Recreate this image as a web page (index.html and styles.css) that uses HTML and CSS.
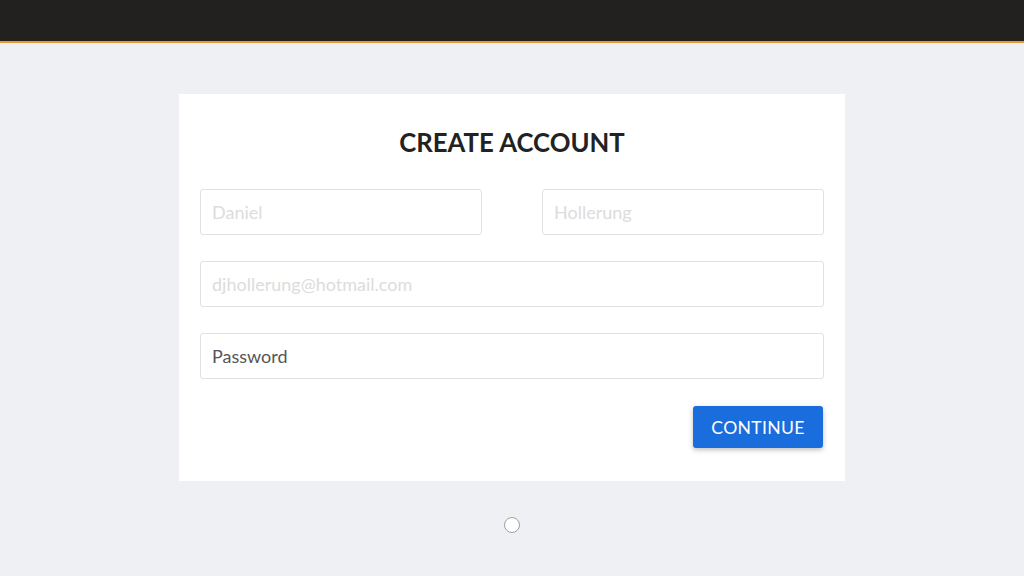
FILE: index.html
```html
<!DOCTYPE html>
<html lang="en">
<head>
<meta charset="utf-8">
<title>Create Account</title>
<link rel="stylesheet" href="styles.css">
</head>
<body>
<header class="topbar"></header>
<main class="page">
  <form class="card">
    <h1 class="title">CREATE ACCOUNT</h1>
    <div class="row two">
      <input class="field" type="text" placeholder="Daniel">
      <input class="field" type="text" placeholder="Hollerung">
    </div>
    <div class="row">
      <input class="field" type="email" placeholder="djhollerung@hotmail.com">
    </div>
    <div class="row">
      <input class="field filled" type="text" value="Password">
    </div>
    <div class="actions">
      <button class="btn" type="button">CONTINUE</button>
    </div>
  </form>
  <div class="spinner"></div>
</main>
</body>
</html>
```
FILE: styles.css
```css
html, body {
  margin: 0;
  padding: 0;
}
body {
  background: #eff0f4;
  font-family: Lato, "Open Sans", sans-serif;
  height: 576px;
  overflow: hidden;
}
.topbar {
  height: 41px;
  background: #222120;
  border-bottom: 2px solid #e39a2e;
}
.page {
  display: flex;
  flex-direction: column;
  align-items: center;
  padding-top: 51px;
}
.card {
  width: 624px;
  background: #fff;
  padding: 33px 21px 33px 21px;
  display: flex;
  flex-direction: column;
}
.title {
  margin: 0 0 32px 0;
  text-align: center;
  font-size: 25.7px;
  line-height: 30px;
  font-weight: 700;
  color: #222;
}
.row {
  display: flex;
  margin-bottom: 26px;
}
.row.two {
  gap: 60px;
}
.field {
  flex: 1;
  min-width: 0;
  height: 46px;
  box-sizing: border-box;
  border: 1px solid #e2e2e2;
  border-radius: 3px;
  padding: 0 11px;
  font-family: Lato, "Open Sans", sans-serif;
  font-size: 18px;
  color: #555;
  background: #fff;
  outline: none;
}
.field::placeholder {
  color: #dcdcdc;
}
.actions {
  display: flex;
  justify-content: flex-end;
  padding-top: 1px;
  padding-right: 1px;
}
.btn {
  height: 42px;
  width: 130px;
  border: none;
  border-radius: 3px;
  background: #1a6ddc;
  color: #fff;
  font-family: Lato, "Open Sans", sans-serif;
  font-size: 17.6px;
  letter-spacing: 0.3px;
  box-shadow: 0 2px 5px rgba(0, 0, 0, 0.25);
  cursor: pointer;
}
.spinner {
  margin-top: 36px;
  width: 14px;
  height: 14px;
  border: 1.5px solid #a0a0a0;
  border-radius: 50%;
  background: #fff;
}
```
